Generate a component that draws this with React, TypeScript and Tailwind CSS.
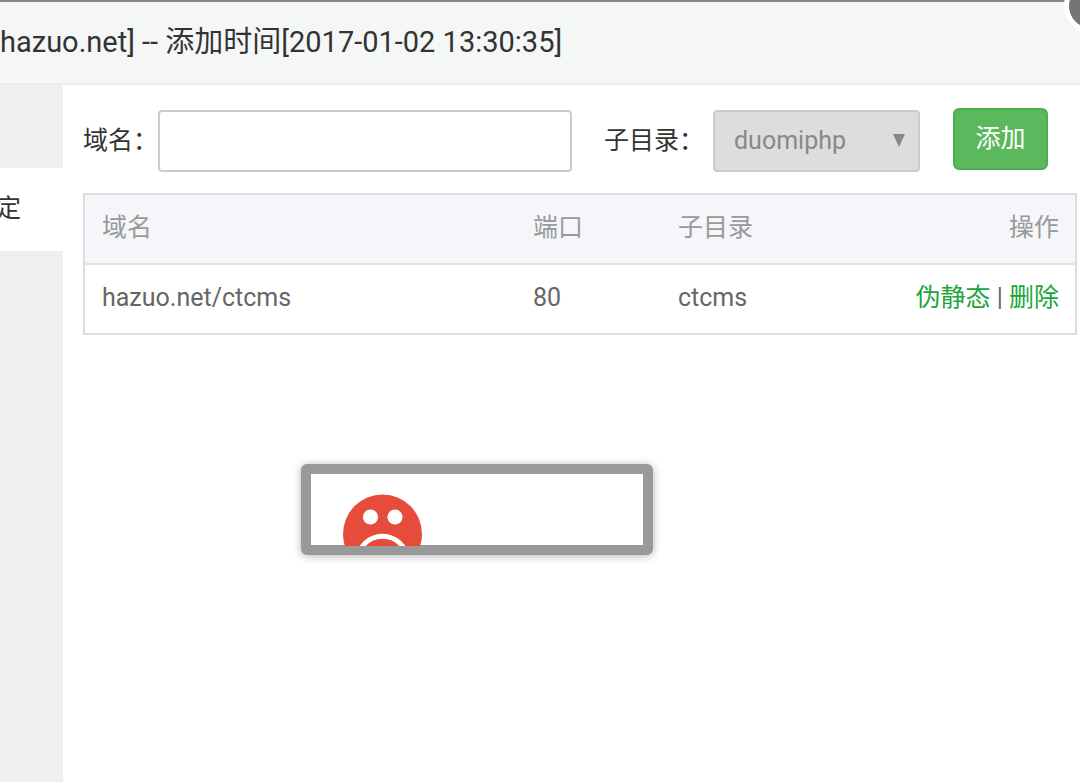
import { useState } from "react";

const sites = [{ domain: "hazuo.net/ctcms", port: 80, dir: "ctcms" }];

const SadFace = () => (
  <svg viewBox="0 0 80 52" className="w-20 h-[52px] shrink-0" aria-hidden="true">
    <circle cx="39.5" cy="40" r="39.5" fill="#e64b3b" />
    <circle cx="27.5" cy="23" r="7.6" fill="#fff" />
    <circle cx="52" cy="23" r="7.6" fill="#fff" />
    <path
      d="M17 56 C27 37.5 52 37.5 62 56"
      fill="none"
      stroke="#fff"
      strokeWidth="5"
    />
  </svg>
);

const App = () => {
  const [domain, setDomain] = useState("");

  return (
    <div className="relative min-h-screen flex flex-col overflow-hidden bg-white text-[#333] text-[25px] leading-8 font-['Roboto','Noto_Sans_CJK_SC',sans-serif]">
      {/* Title bar */}
      <header className="h-[85px] pb-[2px] shrink-0 flex items-center border-t-2 border-t-[#888] border-b-2 border-b-[#e9eeee] bg-[#f5f7f7]">
        <h1 className="text-[29px] whitespace-nowrap">
          hazuo.net] -- 添加时间[2017-01-02 13:30:35]
        </h1>
      </header>
      <button
        type="button"
        aria-label="关闭"
        className="absolute -top-[21px] -right-[38px] size-[54px] rounded-full border-[5px] border-white bg-[#757575]"
      />

      <div className="flex-1 flex">
        {/* Side menu */}
        <nav className="w-[63px] shrink-0 pt-[83px] bg-[#eef0f0]">
          <a
            href="#bind"
            className="h-[83px] pr-[42px] pb-[2px] flex items-center justify-end overflow-hidden bg-white"
          >
            定
          </a>
        </nav>

        <main className="flex-1 min-w-0 pt-[23px] pl-5 pr-[3px]">
          <form
            className="h-16 flex items-end"
            onSubmit={(e) => e.preventDefault()}
          >
            <label
              htmlFor="domain"
              className="h-[62px] flex items-center shrink-0"
            >
              域名：
            </label>
            <input
              id="domain"
              type="text"
              value={domain}
              onChange={(e) => setDomain(e.target.value)}
              className="h-[62px] flex-1 min-w-0 px-4 rounded-[4px] border-2 border-[#ccc] bg-white outline-none"
            />
            <label
              htmlFor="dir"
              className="ml-8 mr-[9px] h-[62px] flex items-center shrink-0"
            >
              子目录：
            </label>
            <div className="relative w-[207px] shrink-0 text-[#888]">
              <select
                id="dir"
                disabled
                className="w-full h-[62px] pl-[19px] appearance-none opacity-100 rounded-[4px] border-2 border-[#ccc] bg-[#ddd]"
              >
                <option>duomiphp</option>
              </select>
              <svg
                viewBox="0 0 12 13"
                className="absolute right-[15px] top-6 w-3 h-[13px] pointer-events-none"
                aria-hidden="true"
              >
                <path d="M0 0H12L6 13Z" fill="#888" />
              </svg>
            </div>
            <button
              type="submit"
              className="self-start ml-[33px] mr-[29px] w-[95px] h-[62px] shrink-0 rounded-md border-2 border-[#4cae4c] bg-[#5cb85c] text-white"
            >
              添加
            </button>
          </form>

          <table className="mt-[21px] w-full table-fixed border-collapse border-2 border-[#ddd]">
            <thead>
              <tr className="h-[70px] bg-[#f4f6fa] text-[#999] text-left border-b-2 border-[#dfe1e4]">
                <th className="pl-[17px] pb-[3px] font-normal">域名</th>
                <th className="w-[145px] pl-[17px] pb-[3px] font-normal">端口</th>
                <th className="w-[190px] pl-[17px] pb-[3px] font-normal">子目录</th>
                <th className="w-[225px] pr-4 pb-[3px] font-normal text-right">
                  操作
                </th>
              </tr>
            </thead>
            <tbody>
              {sites.map((site) => (
                <tr key={site.domain} className="h-[70px] text-[#666]">
                  <td className="pl-[17px] pb-[3px]">{site.domain}</td>
                  <td className="pl-[17px] pb-[3px]">{site.port}</td>
                  <td className="pl-[17px] pb-[3px]">{site.dir}</td>
                  <td className="pr-4 pb-[3px] text-right whitespace-nowrap">
                    <a href="#rewrite" className="text-[#20a53a]">
                      伪静态
                    </a>{" "}
                    |{" "}
                    <a href="#delete" className="text-[#20a53a]">
                      删除
                    </a>
                  </td>
                </tr>
              ))}
            </tbody>
          </table>
        </main>
      </div>

      {/* Error box */}
      <div
        role="alert"
        className="absolute left-[301px] top-[464px] w-[352px] h-[91px] pt-5 pl-8 rounded-md border-10 border-[#999] bg-white shadow-[0_1px_8px_rgba(0,0,0,0.3)]"
      >
        <SadFace />
      </div>
    </div>
  );
};
export default App;
